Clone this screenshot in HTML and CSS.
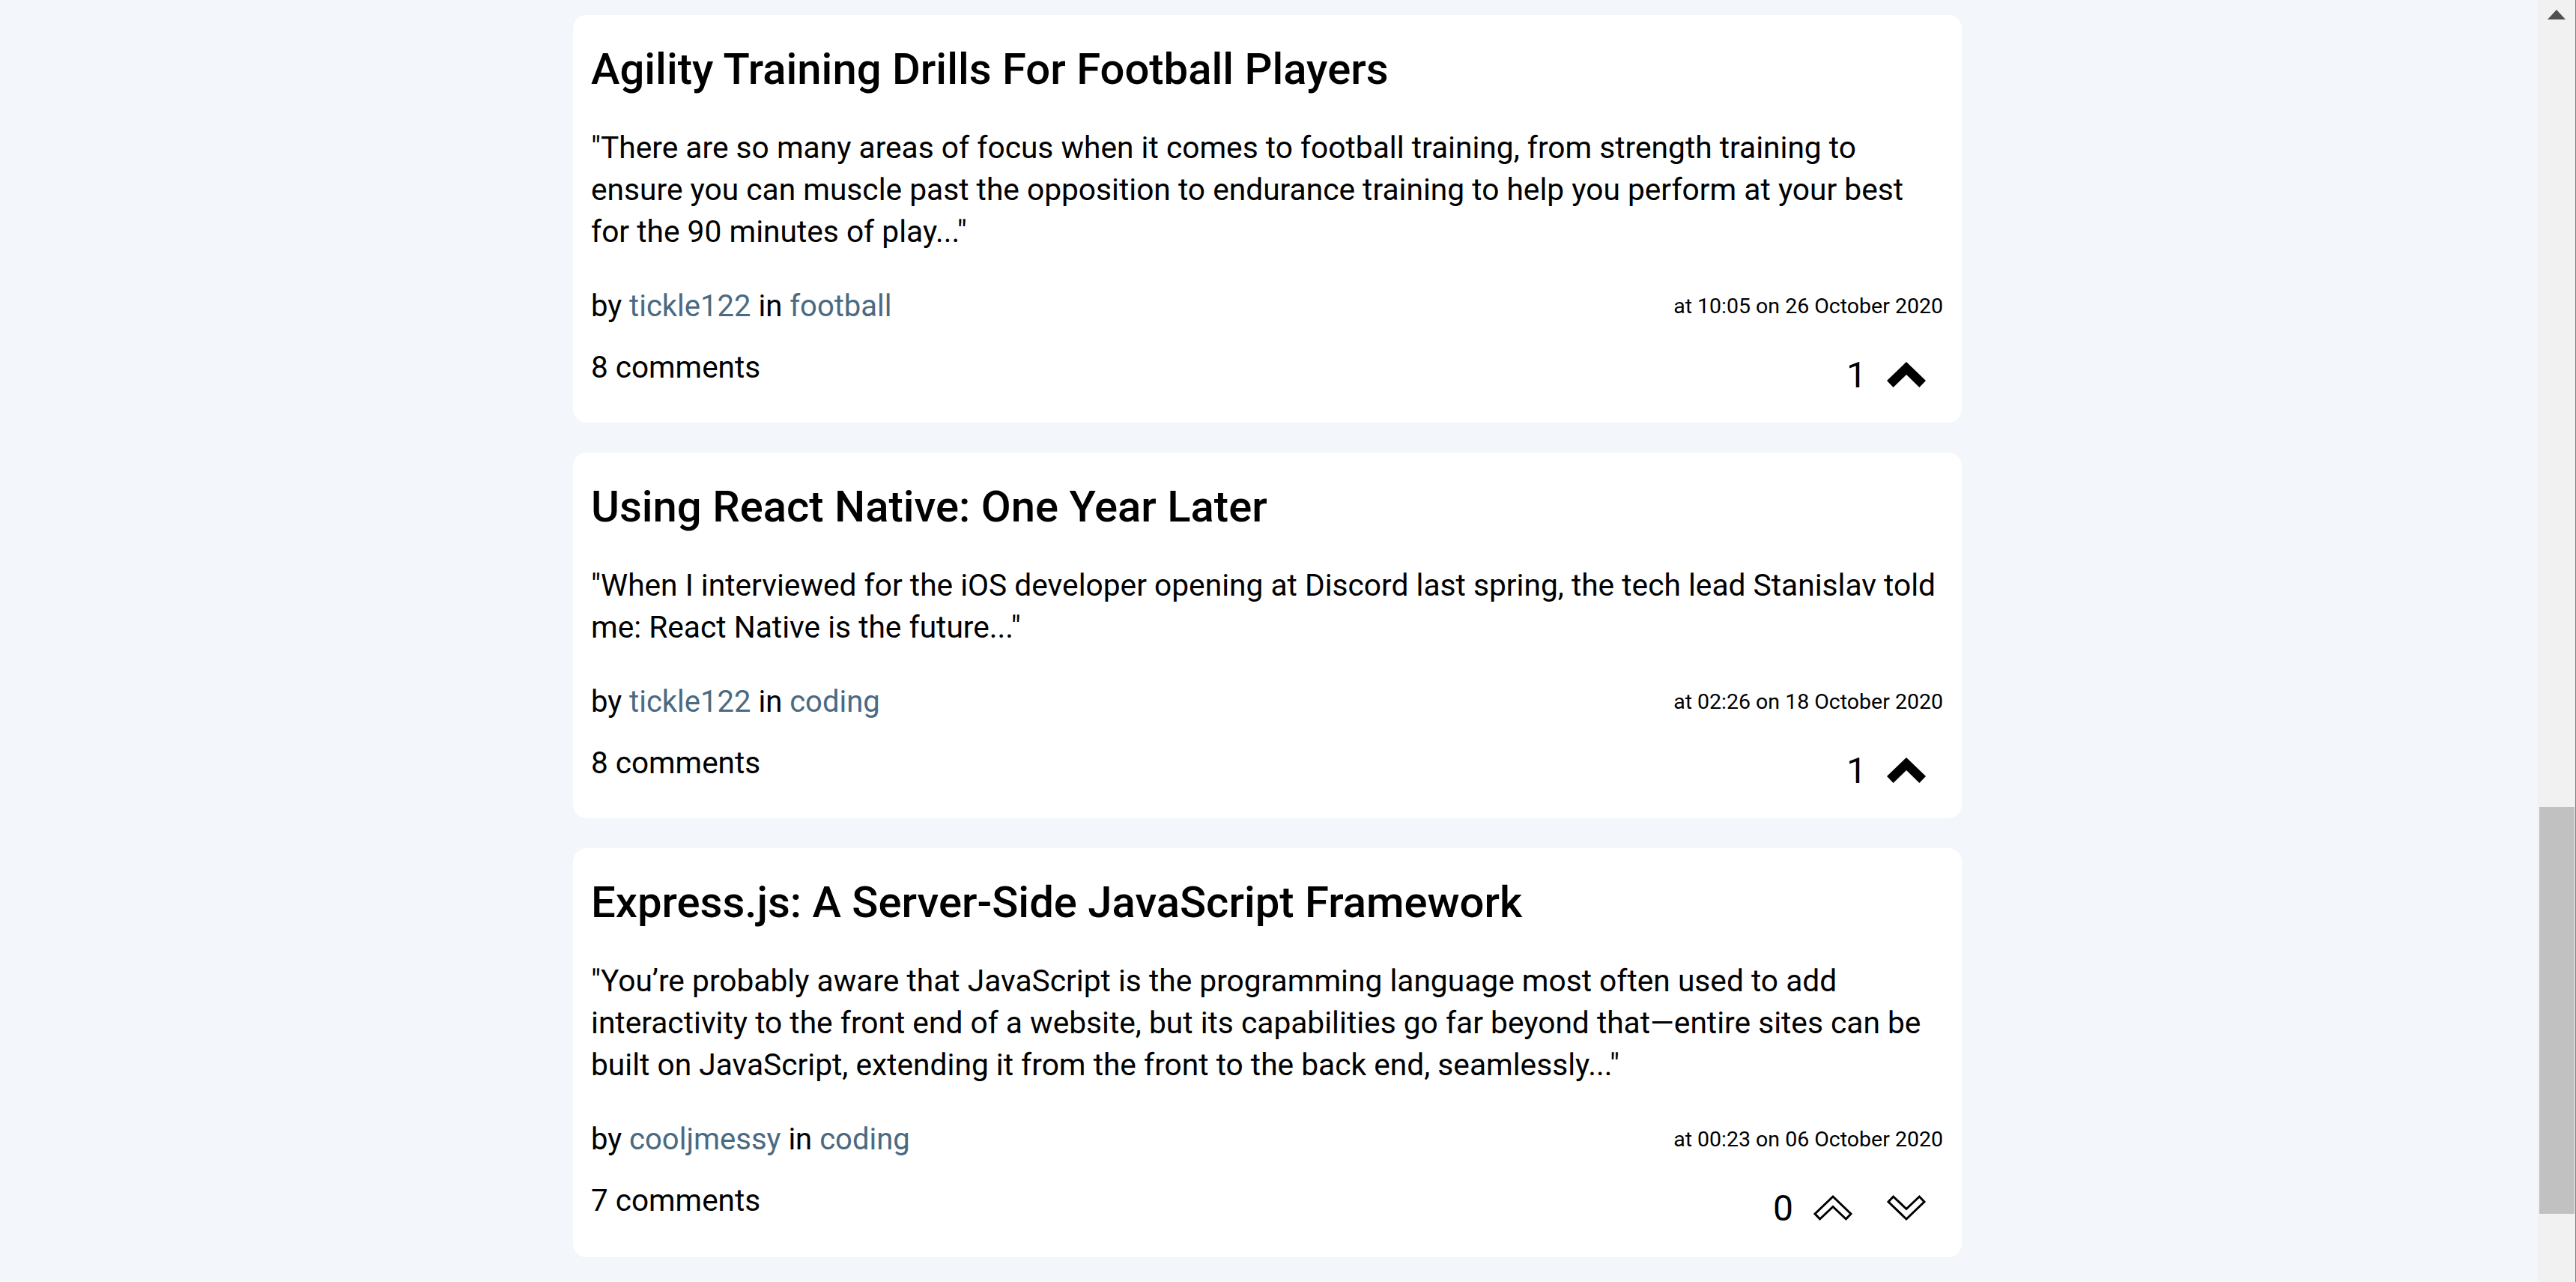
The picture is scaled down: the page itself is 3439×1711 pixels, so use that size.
FILE: index.html
```html
<!DOCTYPE html>
<html lang="en">
<head>
<meta charset="utf-8">
<title>Articles</title>
<link rel="stylesheet" href="styles.css">
</head>
<body>
<div class="window">
  <main class="feed">
    <article class="card">
      <h2 class="card-title">Agility Training Drills For Football Players</h2>
      <p class="excerpt">"There are so many areas of focus when it comes to football training, from strength training to<br>ensure you can muscle past the opposition to endurance training to help you perform at your best<br>for the 90 minutes of play..."</p>
      <div class="meta-row">
        <p class="byline">by <a href="#">tickle122</a> in <a href="#">football</a></p>
        <span class="date">at 10:05 on 26 October 2020</span>
      </div>
      <div class="footer-row">
        <span class="comments">8 comments</span>
        <div class="votes">
          <span class="count">1</span>
          <button class="vote" aria-label="upvote">
            <svg width="52" height="34" viewBox="0 0 52 34"><polygon class="filled" points="26,0 52,25 43.4,34 26,17 8.6,34 0,25"/></svg>
          </button>
        </div>
      </div>
    </article>

    <article class="card">
      <h2 class="card-title">Using React Native: One Year Later</h2>
      <p class="excerpt">"When I interviewed for the iOS developer opening at Discord last spring, the tech lead Stanislav told<br>me: React Native is the future..."</p>
      <div class="meta-row">
        <p class="byline">by <a href="#">tickle122</a> in <a href="#">coding</a></p>
        <span class="date">at 02:26 on 18 October 2020</span>
      </div>
      <div class="footer-row">
        <span class="comments">8 comments</span>
        <div class="votes">
          <span class="count">1</span>
          <button class="vote" aria-label="upvote">
            <svg width="52" height="34" viewBox="0 0 52 34"><polygon class="filled" points="26,0 52,25 43.4,34 26,17 8.6,34 0,25"/></svg>
          </button>
        </div>
      </div>
    </article>

    <article class="card card-tall">
      <h2 class="card-title">Express.js: A Server-Side JavaScript Framework</h2>
      <p class="excerpt">"You’re probably aware that JavaScript is the programming language most often used to add<br>interactivity to the front end of a website, but its capabilities go far beyond that—entire sites can be<br>built on JavaScript, extending it from the front to the back end, seamlessly..."</p>
      <div class="meta-row">
        <p class="byline">by <a href="#">cooljmessy</a> in <a href="#">coding</a></p>
        <span class="date">at 00:23 on 06 October 2020</span>
      </div>
      <div class="footer-row">
        <span class="comments">7 comments</span>
        <div class="votes">
          <span class="count">0</span>
          <button class="vote" aria-label="upvote">
            <svg width="52" height="34" viewBox="0 0 52 34"><polygon class="outline" points="26,2 50,25 43.4,32 26,15.5 8.6,32 2,25"/></svg>
          </button>
          <button class="vote" aria-label="downvote">
            <svg width="52" height="34" viewBox="0 0 52 34"><polygon class="outline" points="26,32 50,9 43.4,2 26,18.5 8.6,2 2,9"/></svg>
          </button>
        </div>
      </div>
    </article>
  </main>

  <div class="scrollbar" aria-hidden="true">
    <div class="sb-arrow"></div>
    <div class="sb-thumb"></div>
  </div>
</div>
</body>
</html>
```

FILE: styles.css
```css
* {
  box-sizing: border-box;
}

html, body {
  margin: 0;
  padding: 0;
  height: 100%;
  overflow: hidden;
}

body {
  font-family: Roboto, "Liberation Sans", Arial, sans-serif;
  color: #000;
  background: #f3f6fa;
}

.window {
  display: flex;
  height: 100vh;
}

.feed {
  flex: 1;
  display: flex;
  flex-direction: column;
  align-items: center;
  gap: 40px;
  padding: 20px 4px 0 0;
  background: #f3f6fa;
}

.card {
  width: 1854px;
  background: #fff;
  border-radius: 18px;
  padding: 38px 25px 35px 24px;
}

.card-tall {
  padding-bottom: 37px;
}

.card-title {
  margin: 0;
  font-size: 58px;
  font-weight: 500;
  line-height: 68px;
  color: #000;
}

.excerpt {
  margin: 43px 0 0;
  font-size: 40.7px;
  line-height: 56px;
  white-space: nowrap;
}

.meta-row {
  margin-top: 48px;
  display: flex;
  justify-content: space-between;
  align-items: center;
}

.byline {
  margin: 0;
  font-size: 40px;
  line-height: 48px;
}

.byline a {
  color: #4b6a82;
  text-decoration: none;
}

.date {
  font-size: 28.5px;
  line-height: 34px;
}

.footer-row {
  margin-top: 33px;
  display: flex;
  justify-content: space-between;
  align-items: flex-start;
}

.comments {
  font-size: 40.5px;
  line-height: 48px;
}

.votes {
  margin-top: 7px;
  display: flex;
  align-items: flex-end;
}

.count {
  font-size: 48px;
  line-height: 56px;
  margin-right: 4px;
}

.vote {
  display: block;
  margin: 0 0 12px;
  padding: 0 23px;
  border: 0;
  background: none;
  cursor: pointer;
}

.vote svg {
  display: block;
  overflow: visible;
}

.filled {
  fill: #000;
}

.outline {
  fill: none;
  stroke: #000;
  stroke-width: 3;
}

.scrollbar {
  flex: none;
  width: 51px;
  display: flex;
  flex-direction: column;
  align-items: center;
  background: #f1f1f1;
  border-right: 1px solid #72839a;
}

.sb-arrow {
  margin-top: 13px;
  width: 0;
  height: 0;
  border-left: 12.5px solid transparent;
  border-right: 12.5px solid transparent;
  border-bottom: 13px solid #505050;
}

.sb-thumb {
  margin-top: 1051px;
  width: 47px;
  height: 543px;
  margin-left: 1px;
  background: #c1c1c1;
}
```
